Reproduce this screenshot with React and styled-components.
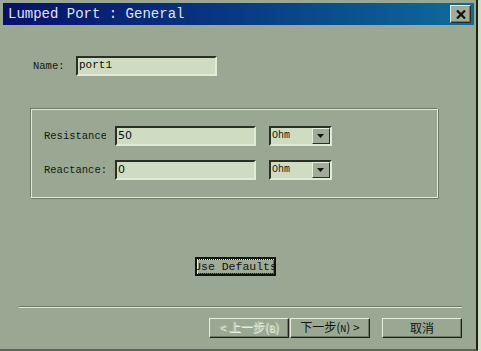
import React from 'react';
import styled, { createGlobalStyle } from 'styled-components';

const GlobalStyle = createGlobalStyle`
  html, body { margin: 0; padding: 0; background: #d2dec4; }
  body { width: 481px; height: 351px; overflow: hidden; }
`;

const Frame = styled.div`
  box-sizing: border-box;
  width: 478px;
  height: 351px;
  padding: 3px 2px 1px 3px;
  border-right: 2px solid #1c2218;
  border-bottom: 2px solid #5c6658;
  background: #9aa893;
  display: flex;
  flex-direction: column;
  font-family: "Liberation Mono", "DejaVu Sans Mono", monospace;
`;

const TitleBar = styled.div`
  height: 22px;
  display: flex;
  align-items: center;
  justify-content: space-between;
  padding: 0 3px 0 5px;
  background: linear-gradient(90deg, #08106a 0%, #083a82 50%, #0e6c9c 100%);
  color: #dfe6ee;
  font-size: 14px;
`;

const CloseButton = styled.button`
  box-sizing: border-box;
  width: 21px;
  height: 18px;
  padding: 0;
  display: flex;
  align-items: center;
  justify-content: center;
  background: #a0ac98;
  border: 1px solid;
  border-color: #e6eede #2a3026 #2a3026 #e6eede;
  box-shadow: inset -1px -1px 0 #6c7866;
`;

const Body = styled.div`
  flex: 1;
  display: flex;
  flex-direction: column;
  padding: 0 12px 0 16px;
  color: #141812;
  font-size: 10px;
`;

const NameRow = styled.div`
  display: flex;
  align-items: center;
  gap: 11px;
  margin: 31px 0 0 14px;
`;

const Field = styled.div`
  box-sizing: border-box;
  width: ${p => p.$w}px;
  height: 20px;
  background: #cfdcc2;
  border: 2px solid;
  border-color: #2a3026 #e2ead8 #e2ead8 #2a3026;
  padding: 1px 0 0 1px;
  font-size: ${p => p.$fs || 11}px;
  font-family: ${p => p.$sans ? '"DejaVu Sans", sans-serif' : '"Liberation Mono", monospace'};
  color: #0c0c0c;
`;

const Group = styled.div`
  box-sizing: border-box;
  width: 408px;
  height: 90px;
  margin: 32px 0 0 11px;
  border: 1px solid;
  border-color: #6e7a68 #e2ead8 #e2ead8 #6e7a68;
  box-shadow: inset 1px 1px 0 #e2ead8, 1px 1px 0 #6e7a68;
  padding: 17px 0 0 13px;
  display: flex;
  flex-direction: column;
  gap: 14px;
`;

const Row = styled.div`
  display: flex;
  align-items: center;
`;

const Label = styled.span`
  width: ${p => p.$w || 62}px;
  margin-right: ${p => p.$gap ?? 9}px;
  overflow: hidden;
  white-space: nowrap;
  font-size: 10.5px;
`;

const Select = styled.div`
  box-sizing: border-box;
  width: 63px;
  height: 20px;
  margin-left: 13px;
  display: flex;
  background: #cfdcc2;
  border: 2px solid;
  border-color: #2a3026 #e2ead8 #e2ead8 #2a3026;
  font-size: 10px;
`;

const SelectText = styled.span`
  flex: 1;
  padding: 2px 0 0 1px;
`;

const Arrow = styled.span`
  box-sizing: border-box;
  width: 18px;
  display: flex;
  align-items: center;
  justify-content: center;
  background: #a0ac98;
  border: 1px solid;
  border-color: #e6eede #2a3026 #2a3026 #e6eede;
`;

const Center = styled.div`
  display: flex;
  justify-content: center;
  margin: 59px 0 0 -10px;
`;

const DefaultsButton = styled.button`
  box-sizing: border-box;
  width: 81px;
  height: 19px;
  padding: 0 2px;
  background: #a0ac98;
  border: 2px solid #101410;
  box-shadow: inset 1px 1px 0 #e6eede, inset -1px -1px 0 #6c7866;
  font-family: "Liberation Mono", monospace;
  font-size: 11.5px;
  color: #101410;
  overflow: hidden;
  white-space: nowrap;
  display: flex;
  align-items: center;
  justify-content: center;
`;

const Focus = styled.span`
  outline: 1px dotted #202420;
  padding: 0 1px;
`;

const Separator = styled.div`
  margin: 30px 0 0 0;
  width: 443px;
  height: 1px;
  background: #6e7a68;
  border-bottom: 1px solid #e2ead8;
`;

const Footer = styled.div`
  display: flex;
  justify-content: flex-end;
  margin: 10px 0 0 0;
  gap: 12px;
`;

const Pair = styled.div`
  display: flex;
  gap: 1px;
`;

const Button = styled.button`
  box-sizing: border-box;
  width: 80px;
  height: 20px;
  padding: 0;
  background: #9aa893;
  border: 1px solid;
  border-color: #e6eede #1c2218 #1c2218 #e6eede;
  box-shadow: inset -1px -1px 0 #6c7866;
  font-family: "Noto Sans CJK SC", "DejaVu Sans", sans-serif;
  font-size: 12px;
  line-height: 16px;
  color: ${p => p.$disabled ? '#c4d0b8' : '#101410'};
  text-shadow: ${p => p.$disabled ? '1px 1px 0 #e6eede' : 'none'};
`;

const Mono = styled.span`
  font-family: "Liberation Mono", monospace;
  font-size: 10px;
`;

const DownArrow = () => (
  <svg width="8" height="5" viewBox="0 0 8 5">
    <path d="M0 0h7L3.5 4z" fill="#101410" />
  </svg>
);

const Dropdown = ({ value }) => (
  <Select>
    <SelectText>{value}</SelectText>
    <Arrow><DownArrow /></Arrow>
  </Select>
);

export default function App() {
  return (
    <>
      <GlobalStyle />
      <Frame>
        <TitleBar>
          <span>Lumped Port : General</span>
          <CloseButton>
            <svg width="10" height="9" viewBox="0 0 10 9">
              <path d="M1 0.5L9 8.5M9 0.5L1 8.5" stroke="#101410" strokeWidth="2.2" />
            </svg>
          </CloseButton>
        </TitleBar>
        <Body>
          <NameRow>
            <Label $w={32} $gap={0}>Name:</Label>
            <Field $w={141}>port1</Field>
          </NameRow>
          <Group>
            <Row>
              <Label>Resistance:</Label>
              <Field $w={141} $sans $fs={11}>50</Field>
              <Dropdown value="Ohm" />
            </Row>
            <Row>
              <Label>Reactance:</Label>
              <Field $w={141} $sans $fs={11}>0</Field>
              <Dropdown value="Ohm" />
            </Row>
          </Group>
          <Center>
            <DefaultsButton><Focus>Use Defaults</Focus></DefaultsButton>
          </Center>
          <Separator />
          <Footer>
            <Pair>
              <Button $disabled>&lt; 上一步(<Mono>B</Mono>)</Button>
              <Button>下一步(<Mono>N</Mono>) &gt;</Button>
            </Pair>
            <Button>取消</Button>
          </Footer>
        </Body>
      </Frame>
    </>
  );
}
